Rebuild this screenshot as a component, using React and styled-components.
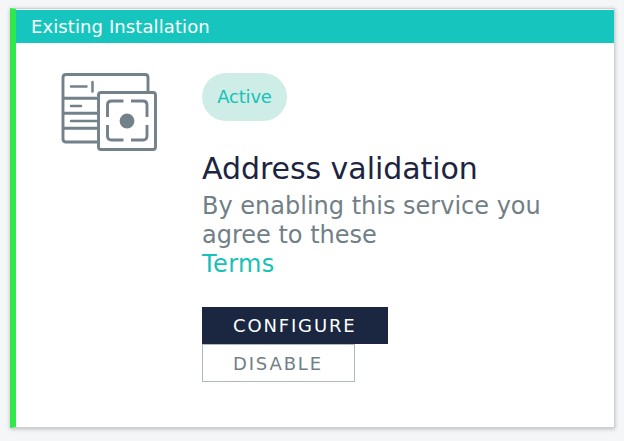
import React from 'react';
import styled, { createGlobalStyle } from 'styled-components';

const Global = createGlobalStyle`
  * { box-sizing: border-box; }
  body { margin: 0; background: #f5f6f8; font-family: "DejaVu Sans", Verdana, sans-serif; }
`;
const Page = styled.main`
  height: 441px; padding: 8px 9px 13px 10px; display: flex; overflow: hidden;
`;
const Card = styled.article`
  flex: 1; display: flex; flex-direction: column; background: #fff; padding-top: 1px;
  border: 1px solid #ced2d6; border-left: 6px solid #2fe84a;
  box-shadow: 0 1px 4px rgba(0,0,0,.25);
`;
const Header = styled.header`
  height: 33px; padding: 0 15px; background: #16c6be; color: #fff;
  font-size: 18px; line-height: 34px; letter-spacing: 0.1px; white-space: nowrap;
`;
const Body = styled.div`
  display: flex; padding: 30px 45px;
`;
const Icon = styled.svg`
  width: 96px; height: 78px; margin-right: 45px; flex: none;
`;
const Content = styled.div`
  display: flex; flex-direction: column; align-items: flex-start;
`;
const Badge = styled.span`
  width: 85px; height: 48px; border-radius: 24px; background: #ceede6; color: #16c1b9;
  text-align: center; font-size: 18px; line-height: 48px; letter-spacing: -0.2px;
`;
const Title = styled.h1`
  margin: 30px 0 0; font-size: 30px; line-height: 36px; font-weight: 400;
  letter-spacing: -0.05px; color: #1b2440; white-space: nowrap;
`;
const Text = styled.p`
  margin: 5px 0 0; font-size: 24px; line-height: 29px; color: #717f86; white-space: nowrap;
`;
const Terms = styled.a`
  color: #16c1b9; letter-spacing: 0.4px;
`;
const Button = styled.button`
  width: ${p => p.$primary ? 186 : 153}px; height: ${p => p.$primary ? 37 : 38}px; padding: 0 0 0 30px;
  margin-top: ${p => p.$primary ? 28 : 0}px;
  border: 1px solid ${p => p.$primary ? '#1b2740' : '#b0b7c0'};
  background: ${p => p.$primary ? '#1b2740' : '#fff'}; color: ${p => p.$primary ? '#fff' : '#717f86'};
  font: 18px "DejaVu Sans", sans-serif; letter-spacing: 1.85px; text-align: left;
`;

export default function App() {
  return (
    <Page>
      <Global />
      <Card>
        <Header><span>Existing Installation</span></Header>
        <Body>
          <Icon viewBox="0 0 96 78" fill="none" stroke="#73818b" strokeWidth="2.9">
            <path d="M36 69H5q-3 0-3-3V4.500q0-3 3-3h79q3 0 3 3V19M2 25.200h34M2 40.300h34M2 55.300h34" />
            <path d="M10 13.500h15.500M31.500 9v9.500M10 33h10M10 48h26" strokeWidth="2.5" strokeLinecap="round" />
            <rect x="37.500" y="19.500" width="57" height="57" rx="2.500" />
            <path d="M46.500 44V32q0-4 4-4h12M70 28h12q4 0 4 4v12M86 52v11q0 4-4 4H70M62.500 67h-12q-4 0-4-4V52" />
            <circle cx="66" cy="48" r="7.400" fill="#73818b" stroke="none" />
          </Icon>
          <Content>
            <Badge>Active</Badge>
            <Title><span>Address validation</span></Title>
            <Text><span>By enabling this service you</span><br /><span>agree to these</span><br /><Terms>Terms</Terms></Text>
            <Button $primary>CONFIGURE</Button>
            <Button>DISABLE</Button>
          </Content>
        </Body>
      </Card>
    </Page>
  );
}
